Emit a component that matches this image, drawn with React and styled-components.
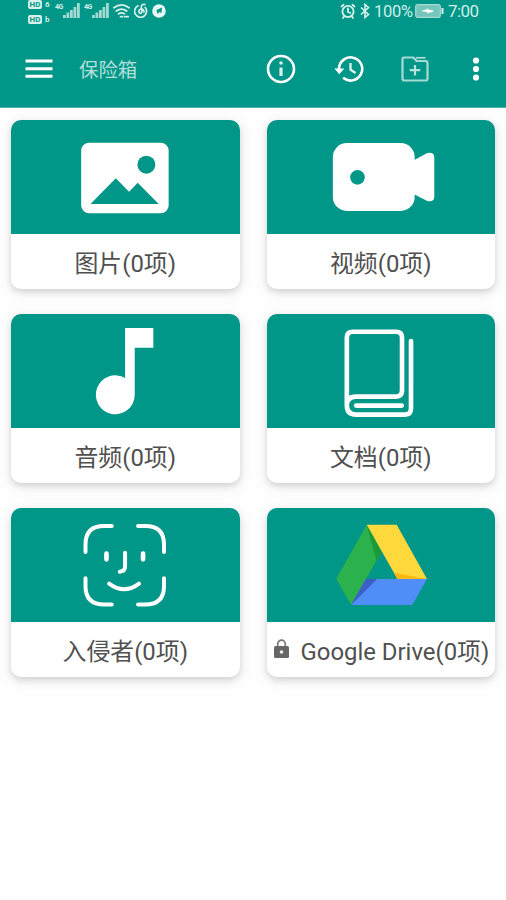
import styled, { createGlobalStyle } from 'styled-components'

const GREEN = '#009688'

const GlobalStyle = createGlobalStyle`
    * {
        box-sizing: border-box;
    }
    body {
        margin: 0;
        background: #fefefe;
        font-family: Roboto, "Noto Sans CJK SC", sans-serif;
    }
`

// icons of the cards, all drawn on the same 3x canvas as the card header
function PictureIcon() {
    return (
        <CardIcon viewBox="33 30 687 342">
            <rect x="244" y="98" width="263" height="212" rx="24" fill="#fff" />
            <circle cx="440" cy="164" r="27" fill={GREEN} />
            <path d="M272 282L348 205L388 245L414 218L477 282Z" fill={GREEN} />
        </CardIcon>
    )
}

function VideoIcon() {
    return (
        <CardIcon viewBox="41 30 687 342">
            <rect x="239" y="99" width="246" height="204" rx="42" fill="#fff" />
            <path d="M480 152L523 129Q544 124 544 143V260Q544 278 523 273L480 251Z" fill="#fff" />
            <circle cx="313" cy="202" r="22" fill={GREEN} />
        </CardIcon>
    )
}

function MusicIcon() {
    return (
        <CardIcon viewBox="33 30 687 342">
            <path d="M376 72H461V131H405V273A58.500 58.500 0 1 1 376 222Z" fill="#fff" />
        </CardIcon>
    )
}

function BookIcon() {
    return (
        <CardIcon viewBox="41 30 687 342">
            <g fill="none" stroke="#fff" strokeWidth="14" strokeLinecap="round" strokeLinejoin="round">
                <path d="M281 305V101Q281 83 299 83H429Q447 83 447 101V260Q447 278 429 278H308Q281 278 281 305Q281 332 308 332H456Q474 332 474 314V111" />
                <path d="M309 305H446" />
            </g>
        </CardIcon>
    )
}

function FaceIcon() {
    return (
        <CardIcon viewBox="33 30 687 342">
            <g fill="none" stroke="#fff" strokeWidth="12" strokeLinecap="round">
                <path d="M257 162V139Q257 84 313 84H336" />
                <path d="M415 84H437Q493 84 493 139V162" />
                <path d="M493 241V265Q493 320 437 320H415" />
                <path d="M336 320H313Q257 320 257 265V241" />
                <path d="M376 164V205Q376 221 360 221" />
                <path d="M328 257Q373 291 418 257" />
            </g>
            <path d="M320 167V184M430 167V184" stroke="#fff" strokeWidth="14" strokeLinecap="round" />
        </CardIcon>
    )
}

function DriveIcon() {
    return (
        <CardIcon viewBox="41 30 687 342">
            <path d="M341 80L249 242L294 321L385 163Z" fill="#2bb24c" />
            <path d="M341 80L385 163L370 188Z" fill="#1b9a37" />
            <path d="M341 80H431L522 243H433Z" fill="#ffd83b" />
            <path d="M433 243L424 224L522 243Z" fill="#fdb813" />
            <path d="M338 243H522L478 321H294Z" fill="#4f8df7" />
            <path d="M338 243H372L294 321Z" fill="#3b5fc4" />
        </CardIcon>
    )
}

const cards = [
    { label: '图片(0项)', Icon: PictureIcon },
    { label: '视频(0项)', Icon: VideoIcon },
    { label: '音频(0项)', Icon: MusicIcon },
    { label: '文档(0项)', Icon: BookIcon },
    { label: '入侵者(0项)', Icon: FaceIcon },
    { label: 'Google Drive(0项)', Icon: DriveIcon, locked: true },
]

function Signal() {
    return (
        <SignalBox>
            <Network>4G</Network>
            <svg width="17" height="15" viewBox="0 0 17 15" fill="#a3dad2">
                <rect x="0" y="12" width="2.800" height="3" />
                <rect x="3.500" y="9.500" width="2.800" height="5.500" />
                <rect x="7" y="7" width="2.800" height="8" />
                <rect x="10.500" y="4" width="2.800" height="11" />
                <rect x="14" y="0" width="2.800" height="15" />
            </svg>
        </SignalBox>
    )
}

function StatusBar() {
    return (
        <Status>
            <StatusLeft>
                <HdColumn>
                    <HdLine><Hd>HD</Hd>6</HdLine>
                    <HdLine><Hd>HD</Hd>b</HdLine>
                </HdColumn>
                <Signal />
                <Signal />
                <svg width="17" height="16" viewBox="0 0 18 16" fill="none" stroke="#d9f1ed" strokeWidth="1.900" strokeLinecap="round">
                    <path d="M1 4.500Q9 -1.500 17 4.500M3.500 8Q9 4 14.500 8M6 11Q9 9 12 11" />
                    <path d="M8 14H10M12.500 14H16" />
                </svg>
                <svg width="14" height="16" viewBox="0 0 14 16" fill="none" stroke="#d9f1ed" strokeWidth="1.700" strokeLinecap="round">
                    <path d="M11.300 4.500A6 6 0 1 1 4 2.800" />
                    <path d="M11 1.500Q7 1 7.300 4L8 8.500Q7.500 11 5.500 10Q3.800 7.500 6.500 6.200Q10 5.500 10 9" />
                </svg>
                <svg width="14" height="16" viewBox="0 0 14 16">
                    <circle cx="7" cy="8" r="6.800" fill="#e8f7f4" />
                    <path d="M4.500 7L10 4.500L9.500 10L7.500 9L5 11V8.500Z" fill={GREEN} />
                </svg>
            </StatusLeft>
            <StatusRight>
                <svg width="16" height="16" viewBox="0 0 16 16" fill="none" stroke="#d9f1ed" strokeWidth="1.800" strokeLinecap="round">
                    <circle cx="8" cy="8.500" r="5.600" />
                    <path d="M8 5.500V9L10.300 10M1.500 3.500L3.500 1.800M14.500 3.500L12.500 1.800M4 13.500L3 15M12 13.500L13 15" />
                </svg>
                <Bluetooth width="12" height="16" viewBox="0 0 12 16" fill="none" stroke="#d9f1ed" strokeWidth="1.600">
                    <path d="M2 4.500L9.500 11.500L6 14.500V1.500L9.500 4.500L2 11.500" />
                </Bluetooth>
                <Percent>100%</Percent>
                <svg width="29" height="14" viewBox="0 0 29 14">
                    <rect x="0.700" y="0.700" width="24.600" height="12.600" rx="2" fill="#74c5bb" stroke="#a9dcd5" strokeWidth="1.200" />
                    <path d="M26.500 4H28.500V10H26.500Z" fill="#d9f1ed" />
                    <path d="M7 7L12 5.500L13 4.500V6L18 6.500V7.500L12.500 9V8Z" fill="#fff" stroke="#fff" strokeWidth="0.500" />
                </svg>
                <Clock>7:00</Clock>
            </StatusRight>
        </Status>
    )
}

function AppBar() {
    return (
        <Bar>
            <BarIcon width="28" height="20" viewBox="0 0 28 20">
                <path d="M0.500 2H27.500M0.500 9.700H27.500M0.500 17.300H27.500" stroke="#fff" strokeWidth="3" />
            </BarIcon>
            <Title>保险箱</Title>
            <Actions>
                <BarIcon width="30" height="30" viewBox="0 0 30 30">
                    <circle cx="15" cy="15" r="13" fill="none" stroke="#fff" strokeWidth="2.600" />
                    <path d="M15 13.500V22" stroke="#d9f1ed" strokeWidth="3.200" />
                    <circle cx="15" cy="9" r="1.800" fill="#d9f1ed" />
                </BarIcon>
                <BarIcon width="30" height="26" viewBox="0 0 30 26">
                    <path d="M5 13A11.600 11.600 0 1 1 9.100 21.800" fill="none" stroke="#fff" strokeWidth="2.600" />
                    <path d="M0.300 12.500H10.300L5.300 18.300Z" fill="#fff" />
                    <path d="M16.500 7V13.600L21.600 17" fill="none" stroke="#e2f4f1" strokeWidth="2.300" />
                </BarIcon>
                <BarIcon width="28" height="26" viewBox="0 0 28 26">
                    <path d="M3 1.500H12.500L15.500 5H24.500Q26.500 5 26.500 7V22.500Q26.500 24.500 24.500 24.500H3.500Q1.500 24.500 1.500 22.500V3Q1.500 1.500 3 1.500Z" fill="none" stroke="#a6dcd4" strokeWidth="2.200" />
                    <path d="M15 1.800H24.500" stroke="#a6dcd4" strokeWidth="1.800" />
                    <path d="M14 9V19.500M8.700 14.200H19.300" stroke="#b8e3dd" strokeWidth="2.200" />
                </BarIcon>
            </Actions>
            <BarIcon width="8" height="24" viewBox="0 0 8 24" fill="#fff">
                <circle cx="4" cy="3.500" r="3.100" />
                <circle cx="4" cy="12" r="3.100" />
                <circle cx="4" cy="20.500" r="3.100" />
            </BarIcon>
        </Bar>
    )
}

function App() {
    return (
        <>
            <GlobalStyle />
            <Header>
                <StatusBar />
                <AppBar />
            </Header>
            <Grid>
                {cards.map(({ label, Icon, locked }) => (
                    <Card key={label}>
                        <CardTop>
                            <Icon />
                        </CardTop>
                        <CardLabel $locked={locked}>
                            {locked && (
                                <svg width="15" height="20" viewBox="0 0 15 20">
                                    <path d="M3.700 8V5A3.800 3.800 0 0 1 11.300 5V8" fill="none" stroke="#777" strokeWidth="1.700" />
                                    <rect x="0" y="7" width="15" height="12" rx="1.600" fill="#666" />
                                    <circle cx="7.500" cy="13" r="1.800" fill="#eee" />
                                </svg>
                            )}
                            <span>{label}</span>
                        </CardLabel>
                    </Card>
                ))}
            </Grid>
        </>
    )
}

const Header = styled.header`
    height: 108px;
    background: ${GREEN};
    border-bottom: 1px solid #4db3a9;
`

const Status = styled.div`
    height: 30px;
    padding: 0 28px;
    display: flex;
    justify-content: space-between;
    color: #d3eeea;
`

const StatusLeft = styled.div`
    display: flex;
    align-items: center;
    gap: 4px;
    height: 22px;
`

const StatusRight = styled.div`
    display: flex;
    align-items: center;
    height: 22px;
`

const HdColumn = styled.div`
    display: flex;
    flex-direction: column;
    align-self: flex-start;
    gap: 5px;
    width: 23px;
`

const HdLine = styled.div`
    display: flex;
    align-items: center;
    gap: 3px;
    height: 9px;
    font-size: 8px;
    line-height: 9px;
    font-weight: 700;

    & + & {
        height: 10px;
    }
`

const Hd = styled.span`
    width: 14px;
    height: 9px;
    border-radius: 2px;
    background: #d9f1ed;
    color: ${GREEN};
    font-size: 8px;
    line-height: 9px;
    text-align: center;
`

const SignalBox = styled.div`
    display: flex;
    height: 15px;
    margin-top: -1px;
`

const Network = styled.span`
    width: 8px;
    font-size: 7px;
    line-height: 8px;
    font-weight: 700;
    letter-spacing: -0.5px;
`

const Bluetooth = styled.svg`
    margin: 0 3px;
`

const Percent = styled.span`
    width: 39px;
    margin-right: 2px;
    font-size: 16.5px;
    letter-spacing: -0.3px;
`

const Clock = styled.span`
    width: 30px;
    margin-left: 4px;
    font-size: 17px;
    letter-spacing: -0.6px;
`

const Bar = styled.div`
    display: flex;
    align-items: center;
    height: 78px;
    padding: 0 26px 0 25px;
`

const BarIcon = styled.svg`
    display: block;
    flex: none;
`

const Title = styled.div`
    margin-left: 26px;
    padding-top: 4px;
    font-size: 19.4px;
    line-height: 28px;
    color: #b5e0da;
`

const Actions = styled.div`
    display: flex;
    align-items: center;
    gap: 37.5px;
    margin-left: auto;
    margin-right: 43px;
`

const Grid = styled.main`
    display: grid;
    grid-template-columns: 228.5px 228.5px;
    gap: 25px 27px;
    padding: 12px 11px;
`

const Card = styled.section`
    height: 169px;
    border-radius: 10px;
    background: #fff;
    overflow: hidden;
    box-shadow: 0 3px 6px rgba(0, 0, 0, 0.13), 0 3px 16px rgba(0, 0, 0, 0.08);
`

const CardTop = styled.div`
    height: 114px;
    background: ${GREEN};
`

const CardIcon = styled.svg`
    display: block;
    width: 100%;
    height: 100%;
`

const CardLabel = styled.div`
    display: flex;
    align-items: center;
    justify-content: ${props => props.$locked ? 'flex-start' : 'center'};
    gap: 12px;
    height: 54px;
    padding-left: ${props => props.$locked ? '7px' : '0'};
    font-size: 23.9px;
    white-space: nowrap;
    color: #505050;
`

export default App
